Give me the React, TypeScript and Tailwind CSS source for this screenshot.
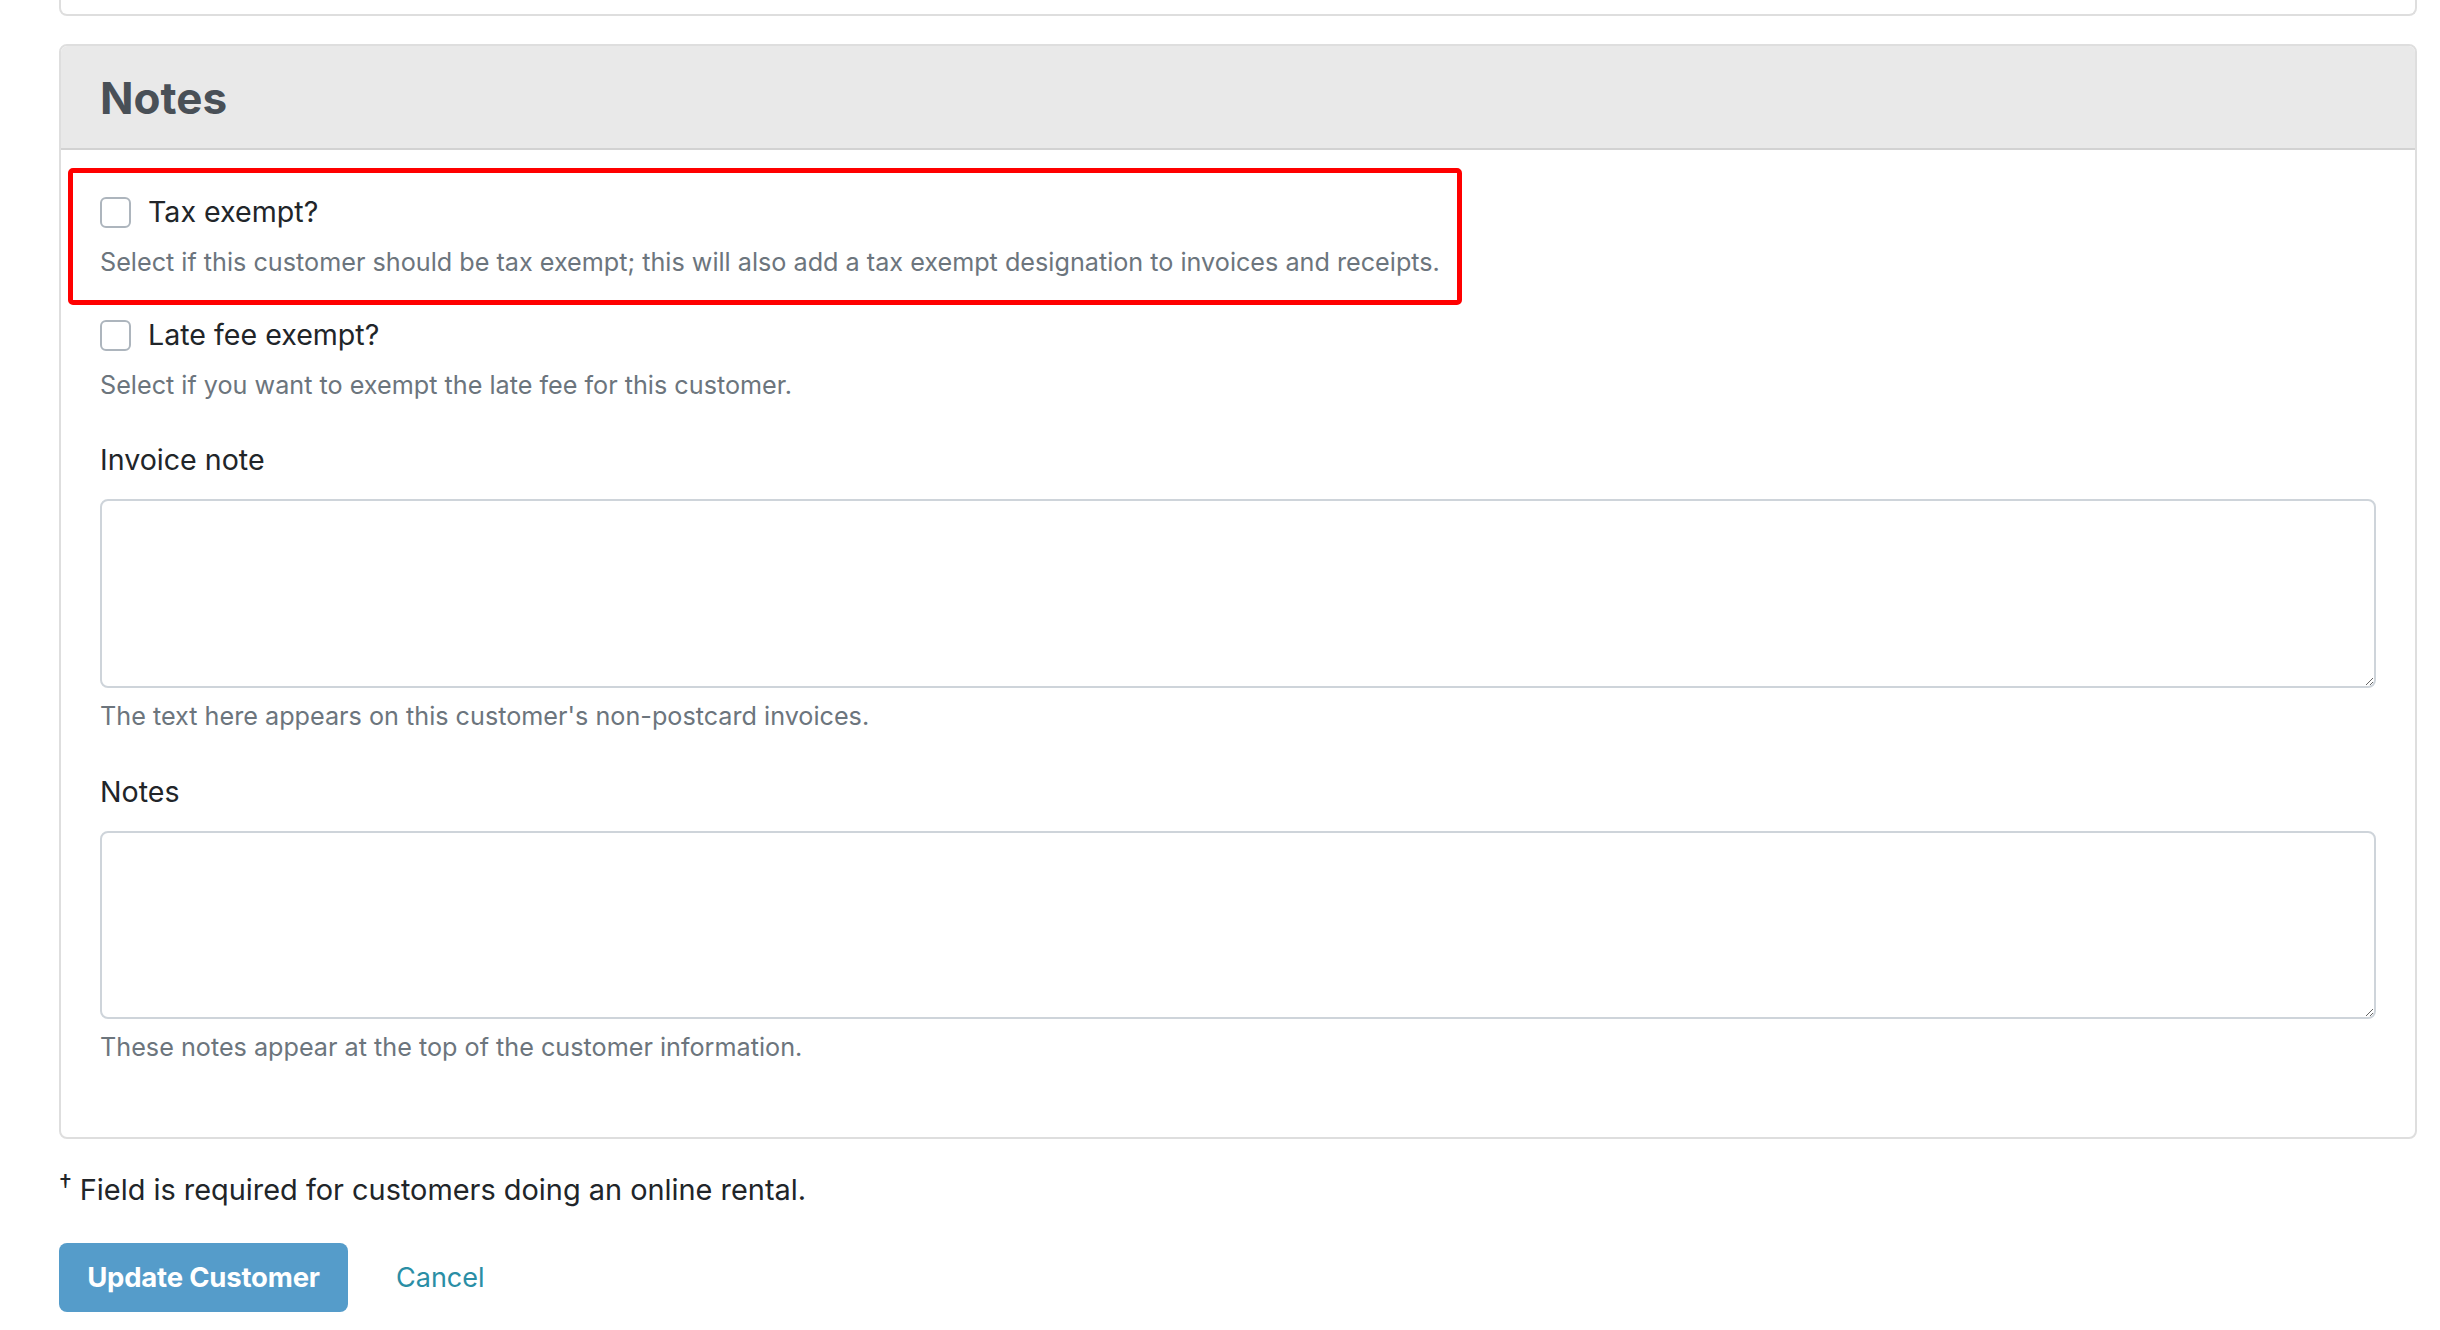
import React from "react";

const font = { fontFamily: "Inter, 'Noto Sans', sans-serif" };

function CheckRow({ label }: { label: string }) {
  return (
    <label className="flex items-center gap-[17px]">
      <input
        type="checkbox"
        className="appearance-none w-[31px] h-[31px] shrink-0 rounded-[6px] border-2 border-[#adb5bd] bg-white"
      />
      <span className="text-[28.6px] leading-none text-[#212529]">{label}</span>
    </label>
  );
}

function Help({ children, className = "" }: { children: React.ReactNode; className?: string }) {
  return <p className={`text-[25.2px] leading-none text-[#6c757d] ${className}`}>{children}</p>;
}

export default function App() {
  return (
    <div className="min-h-screen bg-white pl-[59px]" style={font}>
      <div className="w-[2358px]">
        {/* end of previous card */}
        <div className="h-[16px] border-2 border-t-0 border-[#dedede] rounded-b-[8px]" />

        {/* Notes card */}
        <div className="mt-[28px] border-2 border-[#dedede] rounded-[8px] overflow-hidden">
          <div className="h-[104px] flex items-center px-[39px] pt-[2px] bg-[#e9e9e9] border-b-2 border-[#d2d2d2]">
            <h2 className="text-[44px] leading-none font-bold text-[#495057]">Notes</h2>
          </div>

          <div className="px-[39px] pt-[18px] pb-[77px]">
            <div className="ml-[-32px] w-[1394px] border-[5px] border-[#ff0000] rounded-[5px] pl-[27px] pt-[24px] pb-[25px]">
              <CheckRow label="Tax exempt?" />
              <Help className="mt-[22px]">
                Select if this customer should be tax exempt; this will also add a tax exempt designation to invoices and receipts.
              </Help>
            </div>

            <div className="mt-[15px]">
              <CheckRow label="Late fee exempt?" />
              <Help className="mt-[22px]">Select if you want to exempt the late fee for this customer.</Help>
            </div>

            <label className="block mt-[48px] text-[28.6px] leading-none text-[#212529]">Invoice note</label>
            <textarea className="block mt-[24px] w-full h-[189px] rounded-[8px] border-2 border-[#ced4da] bg-white" />
            <Help className="mt-[16px]">The text here appears on this customer's non-postcard invoices.</Help>

            <label className="block mt-[49px] text-[28.6px] leading-none text-[#212529]">Notes</label>
            <textarea className="block mt-[24px] w-full h-[188px] rounded-[8px] border-2 border-[#ced4da] bg-white" />
            <Help className="mt-[16px]">These notes appear at the top of the customer information.</Help>
          </div>
        </div>

        <p className="mt-[37px] flex items-start text-[28.9px] leading-none text-[#212529]">
          <span className="text-[26px] leading-none mt-[-5px] mr-[8px]">†</span>
          <span>Field is required for customers doing an online rental.</span>
        </p>

        <div className="mt-[38px] flex items-center">
          <button className="h-[69px] w-[289px] rounded-[8px] bg-[#559cca] text-white text-[27.5px] font-bold leading-none tracking-[-0.2px]">
            Update Customer
          </button>
          <a href="#" className="ml-[48px] text-[27px] leading-none text-[#2a8ea5]">
            Cancel
          </a>
        </div>
      </div>
    </div>
  );
}
